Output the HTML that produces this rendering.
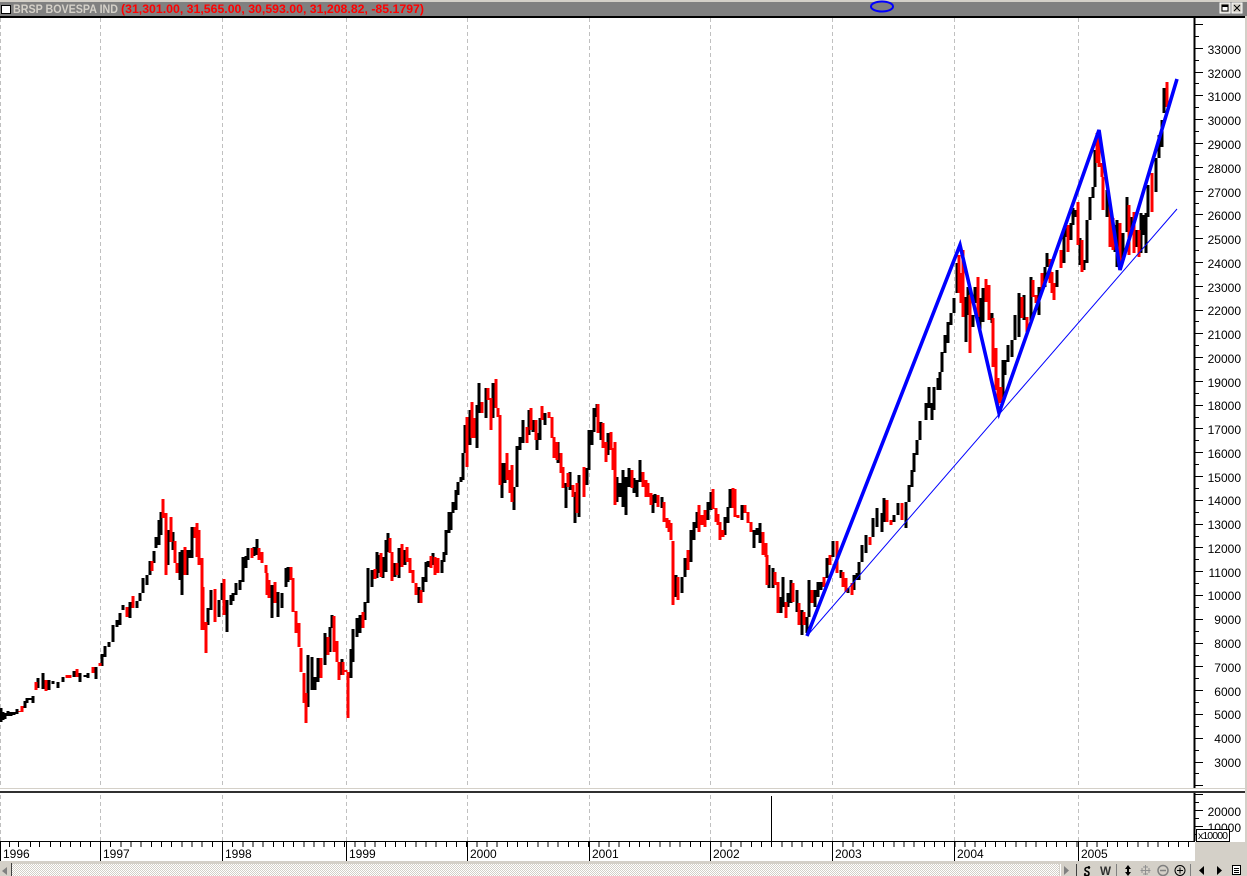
<!DOCTYPE html>
<html><head><meta charset="utf-8"><title>BRSP BOVESPA IND</title>
<style>html,body{margin:0;padding:0;background:#fff;overflow:hidden}svg{display:block}text{font-family:"Liberation Sans",sans-serif}</style></head>
<body>
<svg width="1247" height="876" viewBox="0 0 1247 876" xmlns="http://www.w3.org/2000/svg">
<defs><pattern id="d" width="2" height="2" patternUnits="userSpaceOnUse"><rect width="2" height="2" fill="#fff"/><rect width="1" height="1" fill="#d4d0c8"/><rect x="1" y="1" width="1" height="1" fill="#d4d0c8"/></pattern></defs>
<rect width="1247" height="876" fill="#fff"/>
<!-- title bar -->
<rect width="1247" height="2" fill="#d4d0c8"/>
<rect y="2" width="1247" height="14" fill="#808080"/>
<rect y="16" width="1247" height="2" fill="#000"/>
<rect x="1.5" y="5.5" width="9" height="8" fill="#fff" stroke="#000"/>
<text x="13" y="13" font-size="12" font-weight="bold" fill="#d4d0c8" textLength="105" lengthAdjust="spacingAndGlyphs">BRSP BOVESPA IND</text>
<text x="121" y="13" font-size="12" font-weight="bold" fill="#f00" textLength="303" lengthAdjust="spacingAndGlyphs">(31,301.00, 31,565.00, 30,593.00, 31,208.82, -85.1797)</text>
<ellipse cx="882" cy="6.5" rx="11" ry="5" fill="none" stroke="#00f" stroke-width="2"/>
<rect x="1220" y="3" width="10" height="10" fill="#d4d0c8" stroke="#fff"/><rect x="1222" y="5" width="6" height="6" fill="#fff" stroke="#000"/><rect x="1222" y="5" width="6" height="2"/>
<rect x="1232" y="3" width="10" height="10" fill="#d4d0c8" stroke="#fff"/><path d="M1234 5L1240 11M1240 5L1234 11" stroke="#000" fill="none"/>
<!-- grid -->
<g stroke="#c0c0c0" stroke-dasharray="4 3" shape-rendering="crispEdges" fill="none">
<path d="M0.5 18V841M100.5 18V841M222.5 18V841M346.5 18V841M467.5 18V841M589.5 18V841M710.5 18V841M832.5 18V841M954.5 18V841M1078.5 18V841"/>
</g>
<!-- volume spike -->
<path d="M771.5 796V841" stroke="#000" shape-rendering="crispEdges"/>
<!-- candles -->
<path shape-rendering="crispEdges" fill="none" stroke="#000" stroke-width="3" d="M1 708V722M3 712V720M5 713V719M8 711V716M11 712V716M14 712V715M17 709V714M25 701V708M27 698V703M30 698V700M33 696V703M38 678V688M43 673V689M49 680V690M53 681V684M58 682V688M63 677V682M74 671V677M80 673V682M85 675V677M88 673V678M96 667V679M102 654V666M105 646V657M109 642V647M113 625V642M117 620V627M120 613V625M123 605V610M130 602V618M137 601V608M140 593V601M143 578V593M147 575V585M150 561V575M154 551V563M156 537V548M159 520V545M161 512V535M168 530V565M173 532V550M180 552V580M182 550V595M187 550V575M190 550V558M192 527V558M208 608V625M211 590V610M219 600V617M222 583V600M227 600V632M231 595V605M233 593V601M236 583V595M240 580V590M243 557V582M246 556V568M248 548V560M254 547V556M257 539V555M272 585V618M278 592V617M282 593V608M286 568V587M288 567V582M308 655V707M312 657V690M315 677V690M318 658V682M325 633V665M330 627V652M332 615V628M342 659V675M351 649V678M353 629V662M357 618V637M360 615V633M365 602V620M368 568V603M372 570V587M377 552V578M379 555V573M383 557V578M386 540V572M388 533V552M395 563V577M399 548V578M405 550V565M419 587V603M423 577V592M426 562V582M428 561V567M433 553V565M442 560V573M444 552V562M446 530V555M449 512V533M451 512V530M453 502V513M456 490V510M458 482V495M461 477V482M463 453V480M465 425V453M470 410V445M477 405V448M479 383V413M486 388V418M493 383V418M502 463V498M505 463V483M514 487V510M517 446V487M520 437V450M523 420V443M529 410V435M533 420V432M537 433V450M540 418V440M545 413V425M558 442V463M566 483V508M570 472V490M575 492V523M579 475V517M587 468V485M589 430V470M592 430V445M594 408V432M597 404V417M601 422V440M608 433V455M617 477V502M620 483V497M623 470V507M626 477V515M629 468V487M634 478V493M637 480V497M640 460V482M653 495V513M655 494V503M662 497V508M676 575V597M682 577V593M685 558V577M691 530V562M694 522V540M697 512V528M708 502V520M711 492V510M725 517V535M728 507V523M730 489V508M742 505V520M754 530V548M757 528V535M760 523V543M769 565V588M773 568V588M781 597V613M783 577V607M788 593V607M791 580V603M797 590V612M802 610V635M807 617V633M809 580V617M815 590V607M818 582V597M821 582V590M827 558V578M833 541V557M841 570V578M848 588V593M854 575V590M857 573V580M859 562V580M862 545V562M866 535V553M873 518V537M877 508V527M882 513V532M884 498V522M894 515V522M898 503V515M906 502V528M909 485V502M912 470V487M914 453V472M917 440V455M920 421V440M926 403V420M929 387V408M932 403V420M934 387V410M938 378V390M940 372V390M942 352V372M945 335V353M948 322V343M951 313V325M954 298V313M957 263V293M966 297V342M968 287V315M973 315V327M975 287V303M980 298V330M983 288V322M992 313V323M1003 360V398M1005 360V375M1008 345V362M1012 340V357M1015 315V340M1019 293V337M1024 295V320M1031 277V323M1039 287V315M1045 267V287M1047 253V267M1057 270V287M1064 228V263M1066 227V237M1071 223V240M1073 208V225M1076 210V217M1080 238V265M1084 260V270M1087 220V263M1090 197V220M1093 187V198M1095 150V187M1107 190V217M1115 225V252M1117 220V267M1123 233V260M1127 197V232M1132 217V233M1137 230V247M1141 213V253M1143 215V235M1146 213V253M1148 185V217M1156 158V192M1159 135V158M1162 120V147M1164 88V113"/>
<path shape-rendering="crispEdges" fill="none" stroke="#f00" stroke-width="3" d="M20 711V712M22 706V712M36 682V690M46 680V691M67 675V678M70 675V678M77 669V677M93 667V673M100 663V666M127 607V617M133 596V608M152 561V571M163 499V518M166 513V575M171 517V542M175 541V563M177 563V573M185 547V575M195 527V538M197 523V557M199 530V565M202 558V630M203 587V630M206 622V653M215 589V622M224 579V615M252 548V558M259 548V560M262 552V563M266 565V573M267 573V595M269 580V598M275 582V603M291 567V580M293 578V612M296 611V633M299 623V647M301 648V672M304 673V703M306 693V723M321 658V678M328 637V655M334 616V652M337 641V662M339 662V680M343 662V675M346 670V672M348 672V718M363 612V628M375 569V579M381 553V577M390 538V553M392 552V581M397 563V575M402 544V567M407 547V562M410 558V573M413 570V583M416 583V595M421 590V603M431 556V568M435 557V575M438 558V573M467 417V467M472 402V438M474 418V438M482 402V413M488 388V400M491 398V430M496 379V408M498 408V417M500 415V485M507 453V480M510 470V493M512 465V502M527 427V443M531 408V430M536 420V440M542 406V420M549 412V418M552 417V438M554 437V458M557 442V460M561 453V473M563 467V488M568 473V487M573 485V497M577 483V513M584 467V497M598 404V433M603 423V448M606 442V462M611 432V450M613 448V470M615 442V505M632 470V488M643 472V487M646 480V497M648 483V497M651 493V505M658 495V507M664 502V522M667 518V528M669 520V532M671 523V540M673 541V605M678 577V600M688 550V570M699 505V532M702 515V525M705 510V527M713 489V509M716 508V522M718 514V525M720 522V540M723 530V537M733 488V508M735 489V517M738 515V518M745 505V513M748 512V523M751 522V532M763 532V555M766 543V557M767 555V585M775 572V585M778 582V613M786 602V618M793 583V602M799 603V625M804 612V625M812 590V603M824 577V587M830 555V565M837 541V573M843 572V587M846 578V592M852 583V595M870 537V545M887 500V522M891 520V525M902 503V520M959 255V293M961 273V303M963 250V317M970 295V353M978 277V317M986 279V302M989 285V320M993 318V367M996 348V390M998 378V405M1001 387V403M1022 297V318M1027 317V332M1033 280V297M1036 295V303M1042 273V292M1050 259V283M1052 272V293M1054 283V300M1061 250V268M1068 225V252M1078 202V245M1082 240V272M1097 133V163M1099 137V167M1102 163V177M1103 177V210M1110 203V247M1113 218V250M1120 223V262M1129 205V255M1134 212V253M1139 230V257M1152 173V212M1167 82V107"/>
<!-- trend lines -->
<polyline points="807,636 960,245 999,413 1099,130 1120,270 1177,79" fill="none" stroke="#00f" stroke-width="3.6" stroke-linejoin="miter" stroke-linecap="butt"/>
<path d="M807 636L1177 209" fill="none" stroke="#00f" stroke-width="1"/>
<!-- price axis -->
<rect x="1194" y="18" width="51" height="824" fill="#fff"/>
<path d="M1194.5 18V841" stroke="#000" stroke-width="2" shape-rendering="crispEdges"/>
<g stroke="#000" shape-rendering="crispEdges" fill="none">
<path d="M1195 24.5h8M1195 48.5h8M1195 72.5h8M1195 95.5h8M1195 119.5h8M1195 143.5h8M1195 167.5h8M1195 191.5h8M1195 214.5h8M1195 238.5h8M1195 262.5h8M1195 286.5h8M1195 310.5h8M1195 333.5h8M1195 357.5h8M1195 381.5h8M1195 405.5h8M1195 428.5h8M1195 452.5h8M1195 476.5h8M1195 500.5h8M1195 524.5h8M1195 547.5h8M1195 571.5h8M1195 595.5h8M1195 619.5h8M1195 643.5h8M1195 666.5h8M1195 690.5h8M1195 714.5h8M1195 738.5h8M1195 762.5h8M1195 785.5h8"/>
<path d="M1195 36.5h4M1195 60.5h4M1195 83.5h4M1195 107.5h4M1195 131.5h4M1195 155.5h4M1195 179.5h4M1195 203.5h4M1195 226.5h4M1195 250.5h4M1195 274.5h4M1195 298.5h4M1195 321.5h4M1195 345.5h4M1195 369.5h4M1195 393.5h4M1195 417.5h4M1195 440.5h4M1195 464.5h4M1195 488.5h4M1195 512.5h4M1195 536.5h4M1195 559.5h4M1195 583.5h4M1195 607.5h4M1195 631.5h4M1195 655.5h4M1195 678.5h4M1195 702.5h4M1195 726.5h4M1195 750.5h4M1195 773.5h4"/>
<path d="M1195 794.5h8M1195 810.5h8M1195 826.5h8M1195 802.5h4M1195 818.5h4M1195 834.5h4"/>
</g>
<g font-size="12" fill="#000" text-anchor="end">
<text x="1241" y="54">33000</text><text x="1241" y="78">32000</text><text x="1241" y="101">31000</text><text x="1241" y="125">30000</text><text x="1241" y="149">29000</text><text x="1241" y="173">28000</text><text x="1241" y="197">27000</text><text x="1241" y="220">26000</text><text x="1241" y="244">25000</text><text x="1241" y="268">24000</text><text x="1241" y="292">23000</text><text x="1241" y="315">22000</text><text x="1241" y="339">21000</text><text x="1241" y="363">20000</text><text x="1241" y="387">19000</text><text x="1241" y="410">18000</text><text x="1241" y="434">17000</text><text x="1241" y="458">16000</text><text x="1241" y="482">15000</text><text x="1241" y="505">14000</text><text x="1241" y="529">13000</text><text x="1241" y="553">12000</text><text x="1241" y="577">11000</text><text x="1241" y="600">10000</text><text x="1241" y="624">9000</text><text x="1241" y="648">8000</text><text x="1241" y="672">7000</text><text x="1241" y="696">6000</text><text x="1241" y="719">5000</text><text x="1241" y="743">4000</text><text x="1241" y="767">3000</text>
<text x="1241" y="816">20000</text><text x="1241" y="832">10000</text>
</g>
<!-- right edge and separators -->
<rect x="1245" y="16" width="2" height="860" fill="#d4d0c8"/>
<rect y="788" width="1245" height="1" fill="#d4d0c8"/>
<rect y="789" width="1245" height="2" fill="#fff"/>
<rect y="791" width="1245" height="2" fill="#303030"/>
<!-- x10000 box -->
<rect x="1196.5" y="829.5" width="33" height="12" fill="#fff" stroke="#000" shape-rendering="crispEdges"/>
<text x="1198" y="839" font-size="10.5" fill="#000" textLength="30">x10000</text>
<!-- time axis -->
<rect y="842" width="1195" height="19" fill="#fff"/>
<rect x="1195" y="842" width="52" height="34" fill="#d4d0c8"/>
<rect y="841" width="1195" height="1" fill="#000"/>
<g stroke="#000" shape-rendering="crispEdges" fill="none">
<path d="M9.5 842v5M18.5 842v5M30.5 842v5M39.5 842v5M50.5 842v5M60.5 842v5M70.5 842v5M80.5 842v5M90.5 842v5"/>
<path d="M100 844.5H1194" stroke-width="5" stroke-dasharray="1 9.17" stroke-dashoffset="0"/>
<path d="M0.5 842V861M100.5 842V861M222.5 842V861M346.5 842V861M467.5 842V861M589.5 842V861M710.5 842V861M832.5 842V861M954.5 842V861M1078.5 842V861"/>
</g>
<g font-size="12" fill="#000">
<text x="3" y="858">1996</text><text x="103" y="858">1997</text><text x="225" y="858">1998</text><text x="349" y="858">1999</text><text x="470" y="858">2000</text><text x="592" y="858">2001</text><text x="713" y="858">2002</text><text x="835" y="858">2003</text><text x="957" y="858">2004</text><text x="1081" y="858">2005</text>
</g>
<rect y="861" width="1195" height="1" fill="#d4d0c8"/>
<!-- scrollbar / toolbar -->
<rect y="862" width="1247" height="14" fill="#d4d0c8"/>
<rect x="12" y="864" width="1047" height="12" fill="url(#d)"/>
<path d="M7 867V875L2 871Z" fill="#808080"/>
<rect x="11" y="863" width="1" height="13" fill="#404040"/>
<path d="M1064 866V875L1069 870.5Z" fill="#808080"/>
<rect x="1060" y="864" width="1" height="12" fill="#fff"/>
<path d="M1076.5 864V876" stroke="#404040" shape-rendering="crispEdges"/>
<path d="M1116.5 864V876M1190.5 864V876" stroke="#808080" shape-rendering="crispEdges"/>
<path d="M1090 868c-1-1-5-1-5 1.500s4 1 4 4-3 2-5 1M1089 866v3M1085 873v3" fill="none" stroke="#000" stroke-width="1.500"/>
<text x="1100" y="875" font-size="12" font-weight="bold" fill="#303030" textLength="11" lengthAdjust="spacingAndGlyphs">W</text>
<path d="M1128 865l3 4h-2v3h2l-3 4-3-4h2v-3h-2Z" fill="#000"/>
<path d="M1145.500 865v10M1140.500 870.500h10M1143 867h5M1143 874h5M1142 868v5M1149 868v5" stroke="#909090" fill="none"/>
<circle cx="1163" cy="870.500" r="5" fill="none" stroke="#808080" stroke-width="1.500"/><path d="M1160 870.500h6" stroke="#808080" stroke-width="1.500"/>
<circle cx="1180" cy="870.500" r="5" fill="none" stroke="#000"/><path d="M1177 870.500h6M1180 867.500v6" stroke="#000"/>
<path d="M1204 866V875L1199 870.500Z" fill="#000"/>
<path d="M1217 866V875L1222 870.500Z" fill="#000"/>
<rect x="1232.500" y="865.500" width="8" height="9" fill="#fff" stroke="#000"/><path d="M1232 865.500h9M1234 868.500h5M1234 870.500h5M1234 872.500h5" stroke="#000" fill="none"/>
</svg>
</body></html>
